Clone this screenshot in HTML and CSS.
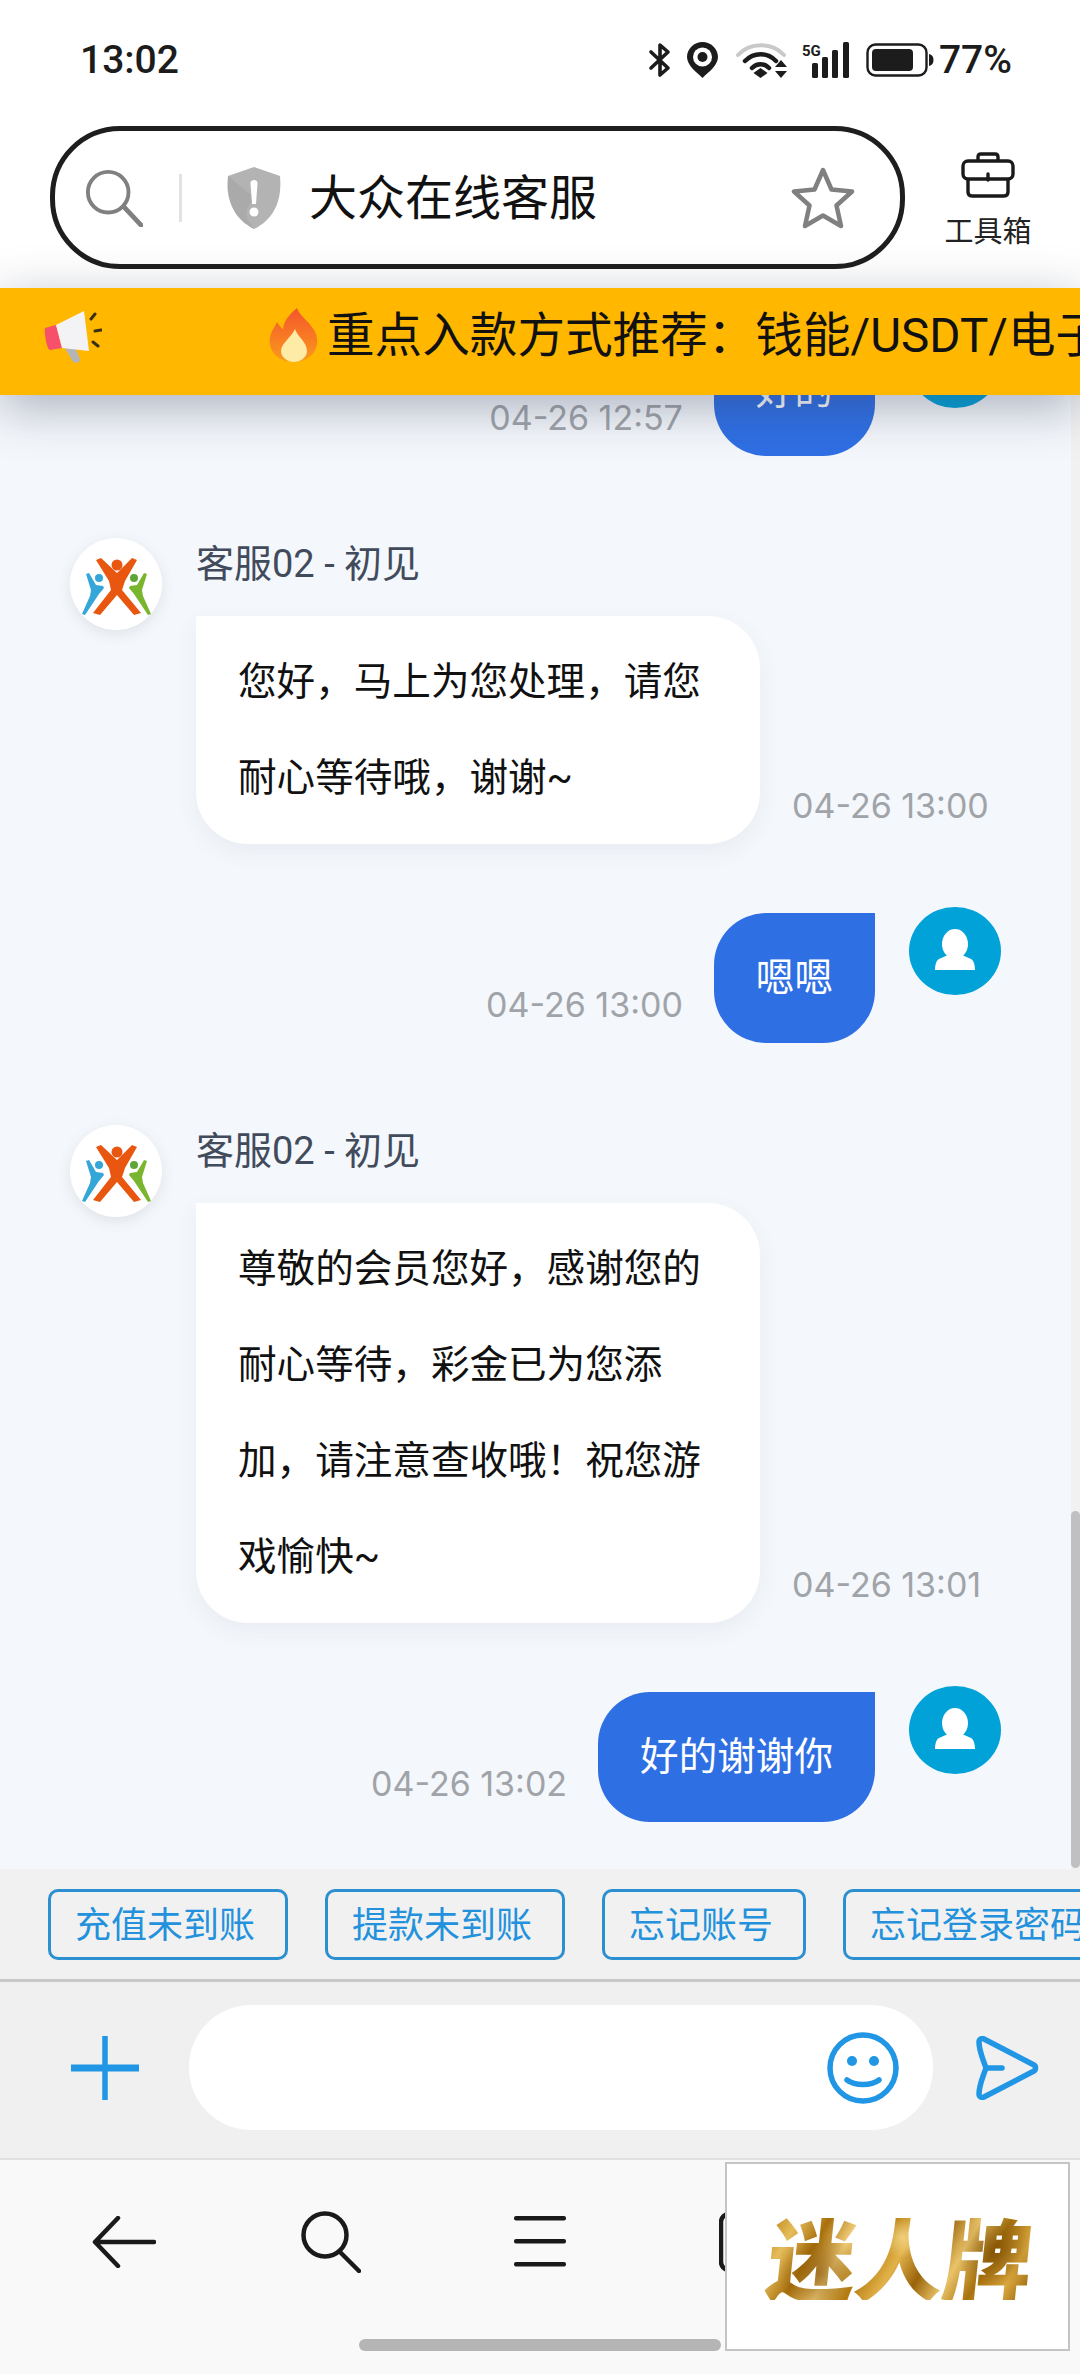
FILE: index.html
```html
<!DOCTYPE html>
<html lang="zh-CN">
<head>
  <meta charset="UTF-8">
  <title>大众在线客服</title>
  <link rel="stylesheet" href="styles.css">
</head>
<body>
  <div class="phone">

    <header class="top">
      <div class="status">
        <span class="clock">13:02</span>
        <div class="status-icons">
          <svg width="24" height="36" viewBox="0 0 24 36"><polyline points="3,10 20,26 12,33 12,3 20,10 3,26" fill="none" stroke="#1c1c1c" stroke-width="3.6" stroke-linejoin="round" stroke-linecap="round"/></svg>
          <svg class="ml-15" width="31" height="36" viewBox="0 0 31 36"><path d="M15.5 0C7 0 0 6.8 0 15c0 8.5 10 15.500 15.500 21C21 30.500 31 23.500 31 15 31 6.800 24 0 15.500 0z" fill="#1c1c1c"/><circle cx="15.500" cy="15" r="9.500" fill="#fff"/><circle cx="15.500" cy="15" r="5" fill="#1c1c1c"/></svg>
          <svg class="ml-18" width="52" height="36" viewBox="0 0 52 36">
            <path d="M2 13C14 0 36 0 48 13" fill="none" stroke="#c9c9c9" stroke-width="4" stroke-linecap="round"/>
            <path d="M9 19C18 10 31 10 40 19" fill="none" stroke="#1c1c1c" stroke-width="4.500" stroke-linecap="round"/>
            <path d="M16 26C21 21 28 21 33 26" fill="none" stroke="#1c1c1c" stroke-width="4.500" stroke-linecap="round"/>
            <path d="M24.500 26l7 5-7 5-7-5z" fill="#1c1c1c"/>
            <path d="M45 18l6 7H39zM45 36l6-7H39z" fill="#1c1c1c"/>
          </svg>
          <svg class="ml-14" width="48" height="36" viewBox="0 0 48 36">
            <text x="0" y="14" class="five-g">5G</text>
            <rect x="10" y="21" width="6" height="15" rx="1.500" fill="#1c1c1c"/>
            <rect x="20" y="15" width="6" height="21" rx="1.500" fill="#1c1c1c"/>
            <rect x="30" y="8" width="6" height="28" rx="1.500" fill="#1c1c1c"/>
            <rect x="41" y="0" width="6" height="36" rx="1.500" fill="#1c1c1c"/>
          </svg>
          <svg class="ml-16" width="68" height="34" viewBox="0 0 68 34">
            <rect x="1.500" y="1.500" width="59" height="31" rx="8" fill="none" stroke="#1c1c1c" stroke-width="2.400"/>
            <rect x="6" y="6" width="41" height="22" rx="4" fill="#1c1c1c"/>
            <path d="M63 11c3 .5 4.500 3 4.500 6s-1.500 5.500-4.500 6z" fill="#1c1c1c"/>
          </svg>
          <span class="batt">77%</span>
        </div>
      </div>

      <div class="addr-row">
        <div class="addr">
          <svg class="addr-search" width="58" height="58" viewBox="0 0 60 60"><circle cx="24" cy="24" r="21" fill="none" stroke="#808080" stroke-width="4"/><line x1="40" y1="39" x2="58" y2="58" stroke="#808080" stroke-width="5" stroke-linecap="round"/></svg>
          <span class="addr-sep"></span>
          <svg width="56" height="62" viewBox="0 0 56 62"><path d="M28 0l26 9c2 22-4 42-26 53C6 51 0 31 2 9z" fill="#b3b3b3"/><path d="M2 9l-.5 14C4 42 14 54 28 62c-6-8-10-14-6-22 2-4 8-8 8-8L2 9z" fill="#a4a4a4" opacity=".6"/><path d="M24.500 16c0-4 7-4 7 0l-1.500 21h-4z" fill="#fff"/><circle cx="28" cy="45" r="4.500" fill="#fff"/></svg>
          <span class="addr-title">大众在线客服</span>
          <svg class="star" width="64" height="62" viewBox="0 0 64 62"><path d="M32 3l8.500 19.500 20.500 2-15.500 14 4.500 20.500L32 48.500 14 59l4.500-20.500L3 24.500l20.500-2z" fill="none" stroke="#808080" stroke-width="4.500" stroke-linejoin="round"/></svg>
        </div>
        <div class="tool">
          <svg width="54" height="46" viewBox="0 0 54 46" fill="none" stroke="#1a1a1a" stroke-width="3.400" stroke-linejoin="round"><path d="M17 9V5c0-2 1-3 3-3h14c2 0 3 1 3 3v4"/><rect x="2" y="9" width="50" height="18" rx="5"/><path d="M7 27v13c0 3 2 4 4 4h32c2 0 4-1 4-4V27"/><path d="M27 22v6" stroke-linecap="round"/></svg>
          <span class="tool-label">工具箱</span>
        </div>
      </div>
    </header>

    <div class="notice">
      <svg class="horn" width="60" height="56" viewBox="0 0 60 56">
        <path d="M21 34l10-3 7 17c1 3-5 5-7 3z" fill="#b5b5b5"/>
        <path d="M3 17l11-3 6 23-12 2C5 39 2 22 3 17z" fill="#f6506a"/>
        <path d="M14 14L42 0l5 40-27-3z" fill="#f3f3f5"/>
        <path d="M49 8l4-5M53 20l6-1M51 31l5 4" stroke="#3a3017" stroke-width="3" stroke-linecap="round"/>
      </svg>
      <svg class="fire" width="50" height="54" viewBox="0 0 50 54">
        <defs>
          <linearGradient id="flame" x1="0" y1="0" x2="0" y2="1">
            <stop offset="0" stop-color="#f4552c"/>
            <stop offset="1" stop-color="#fb9a1c"/>
          </linearGradient>
        </defs>
        <path d="M28 0c3 9 14 14 19 26 5 15-6 28-22 28C10 54-1 44 1 30c1-7 5-11 7-16 2 3 4 6 6 7 1-9 7-15 14-21z" fill="url(#flame)"/>
        <path d="M26 21c2 7 12 13 12 22 0 6-6 11-13 11s-13-5-13-11c0-8 10-13 14-22z" fill="#fdeba6"/>
      </svg>
      <span class="notice-text">重点入款方式推荐：钱能/USDT/电子钱包</span>
    </div>

    <main class="chat">
      <div class="msg own">
        <span class="time">04-26 12:57</span>
        <div class="bubble">好的</div>
        <div class="avatar user"><svg width="44" height="44" viewBox="0 0 44 44"><ellipse cx="22" cy="15" rx="13" ry="15" fill="#fff"/><path d="M15 26c4 3 10 3 14 0l9 4c3 1.500 4 7 4 11H2c0-4 1-9.500 4-11z" fill="#fff"/></svg></div>
      </div>

      <div class="msg agent">
        <div class="avatar logo">
          <svg width="92" height="92" viewBox="0 0 92 92">
            <path d="M16 36l3-1 7 12 7 1 1 2-5 6-4 6-10 15-3-1 8-18 1-6z" fill="#35a6d8"/>
            <path d="M77 36l-3-1-7 12-7 1-1 2 5 6 4 6 10 15 3-1-8-18-1-6z" fill="#79b52d"/>
            <path d="M26 22l5-2 16 15 15-15 5 2-12 21-3 9 19 23-7 2-17-20-17 20-7-2 18-23-2-9z" fill="#e8560f"/>
            <circle cx="47" cy="27" r="5.500" fill="#e8560f"/>
            <circle cx="29" cy="40" r="4" fill="#35a6d8"/>
            <circle cx="64" cy="40" r="4" fill="#5ea637"/>
          </svg>
        </div>
        <div class="msg-body">
          <div class="name">客服02 - 初见</div>
          <div class="msg-line">
            <div class="bubble">您好，马上为您处理，请您耐心等待哦，谢谢~</div>
            <span class="time">04-26 13:00</span>
          </div>
        </div>
      </div>

      <div class="msg own">
        <span class="time">04-26 13:00</span>
        <div class="bubble">嗯嗯</div>
        <div class="avatar user"><svg width="44" height="44" viewBox="0 0 44 44"><ellipse cx="22" cy="15" rx="13" ry="15" fill="#fff"/><path d="M15 26c4 3 10 3 14 0l9 4c3 1.500 4 7 4 11H2c0-4 1-9.500 4-11z" fill="#fff"/></svg></div>
      </div>

      <div class="msg agent">
        <div class="avatar logo">
          <svg width="92" height="92" viewBox="0 0 92 92">
            <path d="M16 36l3-1 7 12 7 1 1 2-5 6-4 6-10 15-3-1 8-18 1-6z" fill="#35a6d8"/>
            <path d="M77 36l-3-1-7 12-7 1-1 2 5 6 4 6 10 15 3-1-8-18-1-6z" fill="#79b52d"/>
            <path d="M26 22l5-2 16 15 15-15 5 2-12 21-3 9 19 23-7 2-17-20-17 20-7-2 18-23-2-9z" fill="#e8560f"/>
            <circle cx="47" cy="27" r="5.500" fill="#e8560f"/>
            <circle cx="29" cy="40" r="4" fill="#35a6d8"/>
            <circle cx="64" cy="40" r="4" fill="#5ea637"/>
          </svg>
        </div>
        <div class="msg-body">
          <div class="name">客服02 - 初见</div>
          <div class="msg-line">
            <div class="bubble">尊敬的会员您好，感谢您的耐心等待，彩金已为您添加，请注意查收哦！祝您游戏愉快~</div>
            <span class="time">04-26 13:01</span>
          </div>
        </div>
      </div>

      <div class="msg own">
        <span class="time">04-26 13:02</span>
        <div class="bubble">好的谢谢你</div>
        <div class="avatar user"><svg width="44" height="44" viewBox="0 0 44 44"><ellipse cx="22" cy="15" rx="13" ry="15" fill="#fff"/><path d="M15 26c4 3 10 3 14 0l9 4c3 1.500 4 7 4 11H2c0-4 1-9.500 4-11z" fill="#fff"/></svg></div>
      </div>

      <div class="scroll-track"><div class="scroll-thumb"></div></div>
    </main>

    <div class="quick">
      <span class="chip">充值未到账</span>
      <span class="chip">提款未到账</span>
      <span class="chip">忘记账号</span>
      <span class="chip">忘记登录密码</span>
    </div>

    <div class="input-row">
      <svg class="plus" width="68" height="64" viewBox="0 0 68 64"><path d="M0 32h68" stroke="#2096e4" stroke-width="7"/><path d="M34 0v64" stroke="#2096e4" stroke-width="5.500"/></svg>
      <div class="input">
        <svg width="72" height="72" viewBox="0 0 72 72" fill="none" stroke="#2096e4"><circle cx="36" cy="36" r="33" stroke-width="5.500"/><path d="M20 48c8 6 24 6 32 0" stroke-width="5.500" stroke-linecap="round"/><circle cx="25" cy="29" r="5" fill="#2096e4" stroke="none"/><circle cx="47" cy="29" r="5" fill="#2096e4" stroke="none"/></svg>
      </div>
      <svg class="send" width="64" height="64" viewBox="0 0 64 64" fill="none" stroke="#2096e4" stroke-width="5.500" stroke-linejoin="round" stroke-linecap="round"><path d="M4 6c0-3 3-4 5-3l50 26c2 1 2 5 0 6L9 61c-2 1-5 0-5-3 0-9 4-17 7-26C8 23 4 15 4 6z"/><path d="M11 32h16"/></svg>
    </div>

    <nav class="nav">
      <div class="nav-icons">
        <svg class="nav-back" width="64" height="52" viewBox="0 0 64 52" fill="none" stroke="#1a1a1a" stroke-width="4.500" stroke-linecap="round" stroke-linejoin="round"><path d="M26 2L3 26l23 24M3 26h59"/></svg>
        <svg width="60" height="62" viewBox="0 0 60 62" fill="none" stroke="#1a1a1a" stroke-width="4.500" stroke-linecap="round"><circle cx="24" cy="24" r="21.500"/><path d="M39 41l19 19"/></svg>
        <svg width="52" height="52" viewBox="0 0 52 52" fill="#1a1a1a"><rect y="0" width="52" height="4.500" rx="2"/><rect y="23" width="52" height="4.500" rx="2"/><rect y="46" width="52" height="4.500" rx="2"/></svg>
        <svg width="60" height="60" viewBox="0 0 60 60" fill="none" stroke="#1a1a1a" stroke-width="4.500"><rect x="2" y="2" width="56" height="56" rx="8"/></svg>
      </div>
      <div class="home-bar"></div>
      <div class="float-logo"><span class="gold">迷人牌</span></div>
    </nav>

  </div>
</body>
</html>
```

FILE: styles.css
```css
* {
  box-sizing: border-box;
  font-family: Roboto, 'Noto Sans CJK SC', sans-serif;
}

body {
  margin: 0;
  background-color: #fff;
}

svg {
  display: block;
  flex-shrink: 0;
}

.phone {
  width: 1080px;
  height: 2374px;
  display: flex;
  flex-direction: column;
  overflow: hidden;
}

/* top bars */
.top {
  background-color: #fff;
  height: 288px;
  flex-shrink: 0;
}

.status {
  height: 126px;
  padding: 38px 68px 0 80px;
  display: flex;
  justify-content: space-between;
  align-items: flex-start;
}

.clock {
  font-size: 39px;
  font-weight: 500;
  color: #1c1c1c;
  line-height: 44px;
}

.status-icons {
  display: flex;
  align-items: center;
  padding-top: 4px;
}

.ml-14 { margin-left: 14px; }
.ml-15 { margin-left: 15px; }
.ml-16 { margin-left: 16px; }
.ml-18 { margin-left: 18px; }

.five-g {
  font-size: 15px;
  font-weight: 700;
  fill: #1c1c1c;
  font-family: Roboto, sans-serif;
}

.batt {
  font-size: 39px;
  font-weight: 500;
  color: #1c1c1c;
  line-height: 36px;
  margin-left: 5px;
}

.addr-row {
  display: flex;
  align-items: flex-start;
  padding-left: 50px;
}

.addr {
  width: 855px;
  height: 143px;
  border: 5px solid #1e1e1e;
  border-radius: 70px;
  display: flex;
  align-items: center;
  padding-left: 30px;
}

.addr-search {
  margin-right: 2px;
}

.addr-sep {
  width: 3px;
  height: 48px;
  background-color: #e2e2e2;
  margin: 0 44px 0 34px;
}

.addr-title {
  font-size: 48px;
  color: #111;
  margin-left: 27px;
  line-height: 1;
  margin-top: 2px;
}

.star {
  margin-left: auto;
  margin-right: 45px;
}

.tool {
  width: 166px;
  display: flex;
  flex-direction: column;
  align-items: center;
  padding-top: 26px;
}

.tool-label {
  font-size: 29px;
  color: #222;
  line-height: 44px;
  margin-top: 12px;
}

/* notice strip */
.notice {
  height: 107px;
  flex-shrink: 0;
  background-color: #ffb700;
  display: flex;
  align-items: center;
  white-space: nowrap;
  overflow: hidden;
  position: relative;
  z-index: 2;
  box-shadow: 0 12px 50px rgba(50, 60, 90, 0.38);
}

.horn {
  margin-left: 42px;
  margin-bottom: 6px;
}

.fire {
  margin-left: 167px;
  margin-bottom: 14px;
}

.notice-text {
  font-size: 47.600px;
  line-height: 1;
  color: #111;
  margin-left: 8px;
  margin-bottom: 10px;
}

/* chat */
.chat {
  flex: 1;
  min-height: 0;
  background-color: #f4f7fb;
  display: flex;
  flex-direction: column;
  justify-content: flex-end;
  overflow: hidden;
  position: relative;
  padding-bottom: 47px;
}

.msg {
  display: flex;
  flex-shrink: 0;
}

.msg.agent {
  padding-left: 70px;
  margin-top: 82px;
}

.msg.own {
  justify-content: flex-end;
  align-items: flex-start;
  padding-right: 79px;
  margin-top: 69px;
}

.avatar {
  width: 92px;
  border-radius: 50%;
  display: flex;
  align-items: center;
  justify-content: center;
  flex-shrink: 0;
}

.avatar.logo {
  height: 92px;
  background-color: #fff;
  box-shadow: 0 4px 14px rgba(80, 90, 110, 0.12);
}

.avatar.user {
  height: 88px;
  background-color: #00a2d8;
  margin-left: 34px;
  margin-top: -6px;
}

.msg-body {
  margin-left: 34px;
}

.name {
  height: 78px;
  font-size: 38px;
  line-height: 52px;
  color: #414b5c;
}

.msg-line {
  display: flex;
  align-items: flex-end;
}

.bubble {
  font-size: 38.600px;
  line-height: 96px;
  padding: 17px 42px;
}

.agent .bubble {
  width: 564px;
  padding: 18px 42px;
  background-color: #fff;
  color: #111;
  border-radius: 0 52px 52px 52px;
  box-shadow: 0 8px 22px rgba(80, 90, 110, 0.07);
}

.own .bubble {
  background-color: #2f6fe4;
  color: #fff;
  border-radius: 52px 0 52px 52px;
  white-space: nowrap;
}

.time {
  font-family: Inter, sans-serif;
  font-size: 34px;
  line-height: 40px;
  color: #a0a4a9;
  margin-bottom: 18px;
  white-space: nowrap;
}

.agent .time {
  margin-left: 32px;
}

.own .time {
  align-self: flex-end;
  margin-right: 31px;
}

.scroll-track {
  position: absolute;
  top: 0;
  right: 0;
  bottom: 0;
  width: 9px;
  background-color: #f1f1f1;
}

.scroll-thumb {
  position: absolute;
  right: 0;
  bottom: 1px;
  width: 9px;
  height: 357px;
  background-color: #c0bfc1;
  border-radius: 5px;
}

/* quick replies */
.quick {
  height: 113px;
  flex-shrink: 0;
  background-color: #f1f1f1;
  border-bottom: 3px solid #c8c8c8;
  display: flex;
  align-items: flex-start;
  gap: 37px;
  padding: 20px 0 0 48px;
  overflow: hidden;
}

.chip {
  height: 71px;
  flex-shrink: 0;
  border: 3px solid #2b8fd0;
  border-radius: 10px;
  padding: 0 30px 0 24px;
  font-size: 36px;
  line-height: 68px;
  color: #2391dc;
  white-space: nowrap;
}

/* input */
.input-row {
  height: 178px;
  flex-shrink: 0;
  background-color: #f0f0f0;
  border-bottom: 2px solid #e0e0e0;
  display: flex;
  align-items: center;
  padding: 0 0 5px 71px;
}

.input {
  width: 744px;
  height: 125px;
  margin-left: 50px;
  background-color: #fff;
  border-radius: 62px;
  display: flex;
  align-items: center;
  justify-content: flex-end;
  padding-right: 34px;
}

.send {
  margin-left: 42px;
}

/* bottom nav */
.nav {
  height: 214px;
  flex-shrink: 0;
  background-color: #f9f9f9;
  position: relative;
  display: flex;
  flex-direction: column;
}

.nav-icons {
  display: flex;
  align-items: center;
  gap: 153px;
  height: 64px;
  margin-top: 50px;
  padding-left: 92px;
}

.nav-back {
  margin-right: -8px;
}

.home-bar {
  width: 362px;
  height: 12px;
  background-color: #b5b5b5;
  border-radius: 6px;
  margin: 65px 0 0 359px;
}

.float-logo {
  position: absolute;
  top: 2px;
  left: 725px;
  width: 345px;
  height: 189px;
  background-color: #fff;
  border: 2px solid #c4c4c4;
  display: flex;
  align-items: center;
  justify-content: center;
}

.gold {
  font-family: 'Noto Sans CJK SC', sans-serif;
  font-size: 89px;
  font-weight: 900;
  line-height: 1;
  letter-spacing: -1px;
  margin: 0 0 2px 4px;
  transform: skewX(-6deg);
  background: radial-gradient(circle at 20% 70%, rgba(120, 70, 0, 0.55) 0, rgba(120, 70, 0, 0) 18%), radial-gradient(circle at 86% 45%, rgba(110, 65, 0, 0.6) 0, rgba(110, 65, 0, 0) 16%), radial-gradient(circle at 50% 30%, rgba(250, 225, 150, 0.7) 0, rgba(250, 225, 150, 0) 14%), linear-gradient(115deg, #b8800f 0%, #e6bd5c 10%, #a86f0c 20%, #f0cd78 30%, #b57c10 40%, #e2b24a 50%, #9a640a 60%, #eac46a 70%, #a8720e 80%, #dca93f 90%, #8f5c08 100%);
  -webkit-background-clip: text;
  background-clip: text;
  color: transparent;
}
```
